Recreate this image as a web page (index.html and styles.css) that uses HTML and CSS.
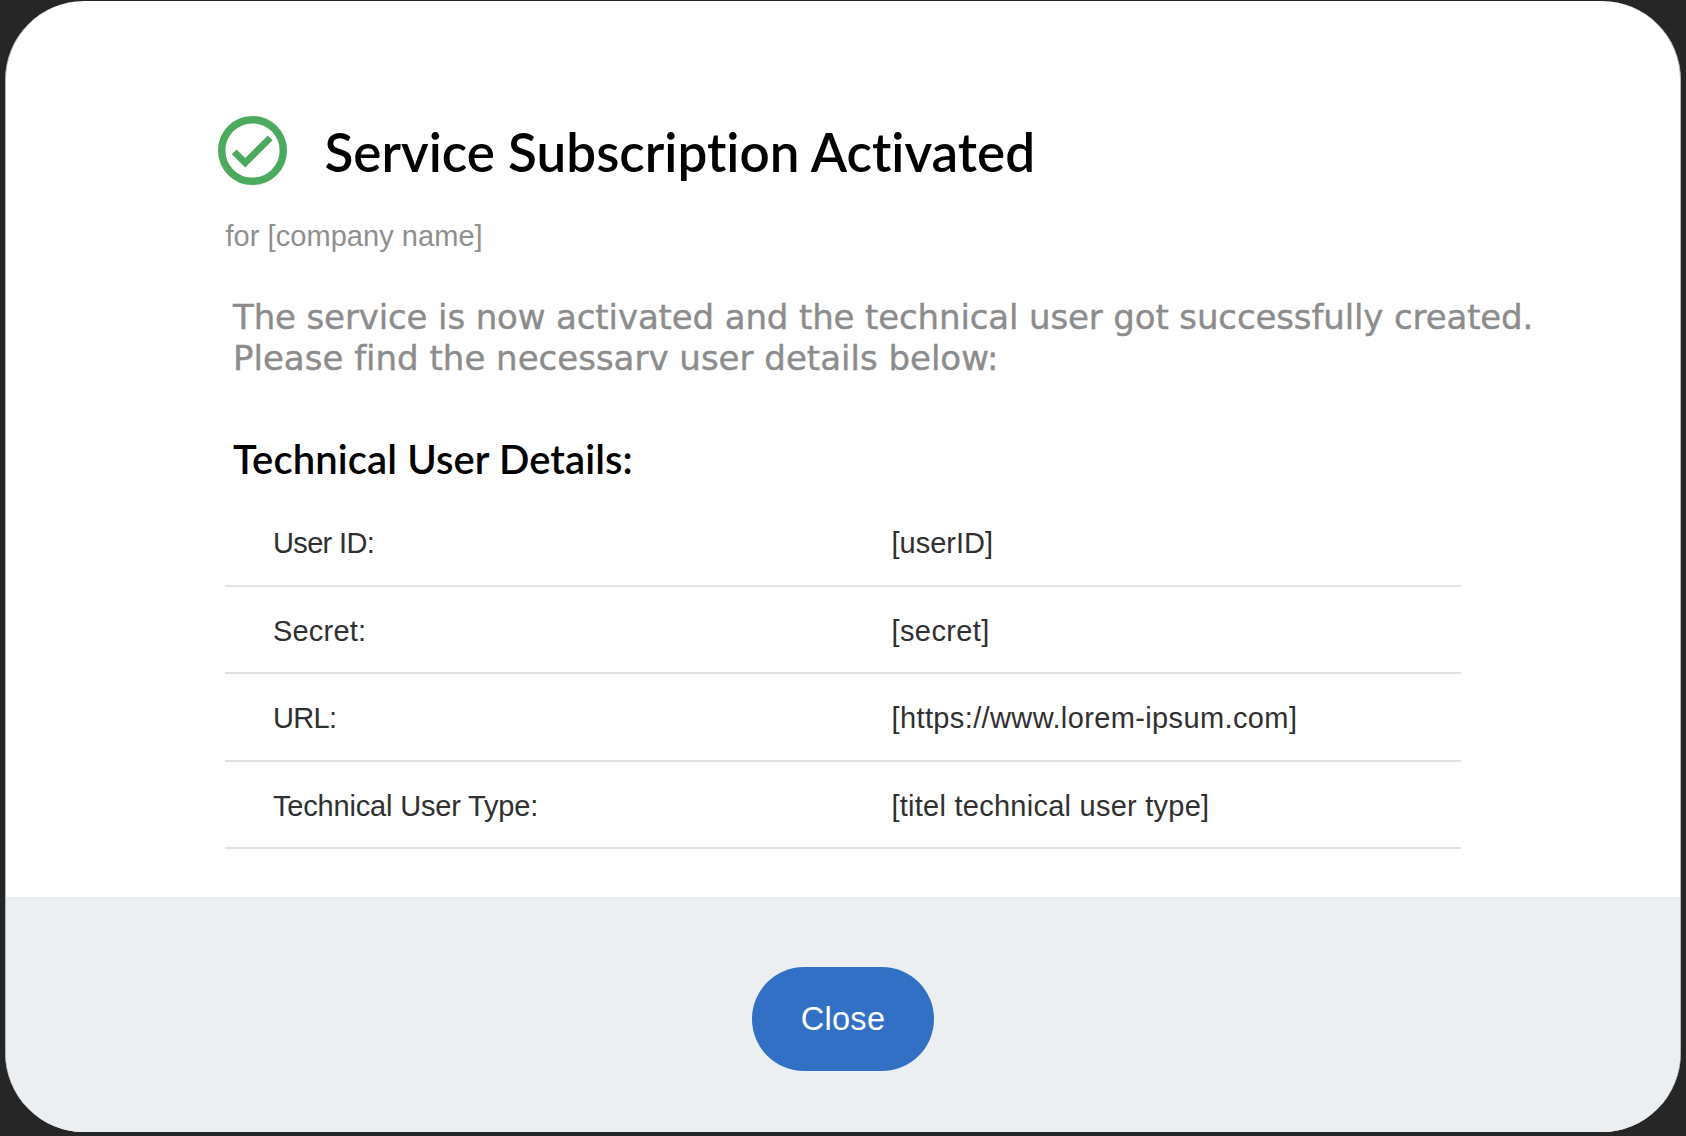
FILE: index.html
```
<!DOCTYPE html>
<html lang="en">
<head>
<meta charset="utf-8">
<title>Service Subscription Activated</title>
<link rel="stylesheet" href="styles.css">
</head>
<body>
<main class="dialog">
  <section class="content">
    <header class="heading">
      <svg class="check" viewBox="0 0 70 70" aria-hidden="true">
        <circle cx="34.5" cy="34.5" r="30.8" fill="none" stroke="#4caa5e" stroke-width="7.4"/>
        <path d="M16.2 35.8L27.2 46.8L52.2 21.8" fill="none" stroke="#4caa5e" stroke-width="6.8"/>
      </svg>
      <h1 class="title">Service Subscription Activated</h1>
    </header>
    <p class="company">for [company name]</p>
    <p class="message"><span class="line-one">The service is now activated and the technical user got successfully created.</span><br>Please find the necessarv user details below:</p>
    <h2 class="subtitle">Technical User Details:</h2>
    <dl class="details">
      <div class="row"><dt class="tight">User ID:</dt><dd class="id">[userID]</dd></div>
      <div class="row"><dt class="loose">Secret:</dt><dd class="secret">[secret]</dd></div>
      <div class="row"><dt class="tight">URL:</dt><dd class="url">[https://www.lorem-ipsum.com]</dd></div>
      <div class="row"><dt class="type">Technical User Type:</dt><dd class="kind">[titel technical user type]</dd></div>
    </dl>
  </section>
  <footer class="footer">
    <button class="close" type="button">Close</button>
  </footer>
</main>
</body>
</html>
```
FILE: styles.css
```
* { box-sizing: border-box; margin: 0; padding: 0; }

body {
  height: 1136px;
  padding: 1px 5px 4px;
  background: #262626;
  font-family: "Liberation Sans", Arial, sans-serif;
  overflow: hidden;
}

.dialog {
  display: flex;
  flex-direction: column;
  height: 1131px;
  border: solid #b5b5b5;
  border-width: 0 1px;
  border-radius: 79px;
  background: #fff;
  overflow: hidden;
}

.content {
  height: 896px;
  padding: 114.5px 0 0 219px;
}

.heading {
  display: flex;
  align-items: flex-start;
  gap: 37px;
  height: 74px;
  margin-left: -7.5px;
}

.check { width: 70px; height: 70px; }

.title {
  padding-top: 4.5px;
  font: 600 53px/64px Lato, sans-serif;
  font-variant-ligatures: none;
  color: #000;
  white-space: nowrap;
}

.company {
  margin: 29px 0 0 0.5px;
  font-size: 29px;
  line-height: 34px;
  letter-spacing: 0.05px;
  color: #8f8f8f;
}

.message {
  height: 81px;
  margin: 44.5px 0 0 8px;
  font: 34px/40.5px "DejaVu Sans", Verdana, sans-serif;
  font-variant-ligatures: none;
  -webkit-text-stroke: 0.4px #8c8c8c;
  color: #8c8c8c;
  white-space: nowrap;
}

.line-one { letter-spacing: -0.13px; }

.subtitle {
  margin: 57px 0 0 8px;
  font: 600 40px/48px Lato, sans-serif;
  font-variant-ligatures: none;
  letter-spacing: 0.1px;
  color: #000;
}

.details { width: 1236px; margin-top: 16px; }

.row {
  display: grid;
  grid-template-columns: 618.5px 1fr;
  align-items: center;
  height: 87.5px;
  padding: 3px 0 0 48px;
  border-bottom: 2px solid #e2e2e2;
  font-size: 29px;
  line-height: 34px;
  color: #303030;
}

.tight { letter-spacing: -0.65px; }
.loose { letter-spacing: 0.2px; }
.type { letter-spacing: -0.18px; }
.id { letter-spacing: 0; }
.secret { letter-spacing: 0.4px; }
.url { letter-spacing: 0.38px; }
.kind { letter-spacing: 0.25px; }

.footer {
  flex: 1;
  display: flex;
  justify-content: center;
  align-items: flex-start;
  padding-top: 69.5px;
  background: #ebeff2;
}

.close {
  width: 182px;
  height: 104px;
  padding-top: 1px;
  border: 0;
  border-radius: 52px;
  background: #3170c5;
  color: #fff;
  font: 32.5px/38px "Liberation Sans", Arial, sans-serif;
  letter-spacing: 0.3px;
}
```
